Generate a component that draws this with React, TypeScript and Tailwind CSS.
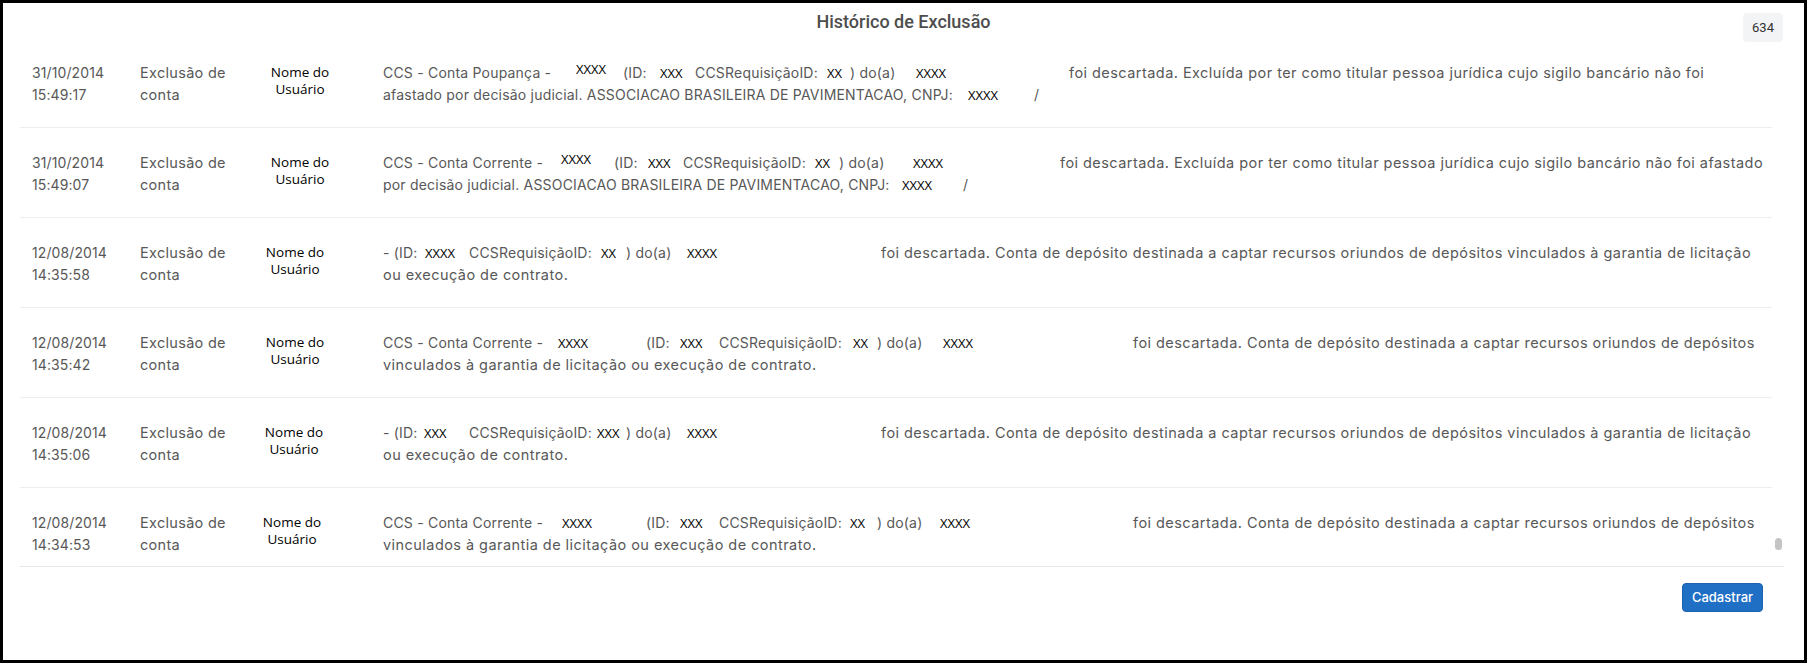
import React from "react";

type Seg = [number, "t" | "m" | "r", string];

interface Row {
    date: [string, string];
    shift: string;
    l1: Seg[];
    l2: Seg[];
}

const rows: Row[] = [
    {
        date: ["31/10/2014", "15:49:17"],
        shift: "",
        l1: [
            [0, "t", "CCS - Conta Poupança -"],
            [193, "r", "XXXX"],
            [240, "t", "(ID:"],
            [277, "m", "XXX"],
            [312, "t", "CCSRequisiçãoID:"],
            [444, "m", "XX"],
            [467, "t", ") do(a)"],
            [533, "m", "XXXX"],
            [686, "t", "foi descartada. Excluída por ter como titular pessoa jurídica cujo sigilo bancário não foi"],
        ],
        l2: [
            [0, "t", "afastado por decisão judicial. ASSOCIACAO BRASILEIRA DE PAVIMENTACAO, CNPJ:"],
            [585, "m", "XXXX"],
            [651, "t", "/"],
        ],
    },
    {
        date: ["31/10/2014", "15:49:07"],
        shift: "",
        l1: [
            [0, "t", "CCS - Conta Corrente -"],
            [178, "r", "XXXX"],
            [231, "t", "(ID:"],
            [265, "m", "XXX"],
            [300, "t", "CCSRequisiçãoID:"],
            [432, "m", "XX"],
            [456, "t", ") do(a)"],
            [530, "m", "XXXX"],
            [677, "t", "foi descartada. Excluída por ter como titular pessoa jurídica cujo sigilo bancário não foi afastado"],
        ],
        l2: [
            [0, "t", "por decisão judicial. ASSOCIACAO BRASILEIRA DE PAVIMENTACAO, CNPJ:"],
            [519, "m", "XXXX"],
            [580, "t", "/"],
        ],
    },
    {
        date: ["12/08/2014", "14:35:58"],
        shift: "-translate-x-[5px]",
        l1: [
            [0, "t", "- (ID:"],
            [42, "m", "XXXX"],
            [86, "t", "CCSRequisiçãoID:"],
            [218, "m", "XX"],
            [243, "t", ") do(a)"],
            [304, "m", "XXXX"],
            [498, "t", "foi descartada. Conta de depósito destinada a captar recursos oriundos de depósitos vinculados à garantia de licitação"],
        ],
        l2: [[0, "t", "ou execução de contrato."]],
    },
    {
        date: ["12/08/2014", "14:35:42"],
        shift: "-translate-x-[5px]",
        l1: [
            [0, "t", "CCS - Conta Corrente -"],
            [175, "m", "XXXX"],
            [263, "t", "(ID:"],
            [297, "m", "XXX"],
            [336, "t", "CCSRequisiçãoID:"],
            [470, "m", "XX"],
            [494, "t", ") do(a)"],
            [560, "m", "XXXX"],
            [750, "t", "foi descartada. Conta de depósito destinada a captar recursos oriundos de depósitos"],
        ],
        l2: [[0, "t", "vinculados à garantia de licitação ou execução de contrato."]],
    },
    {
        date: ["12/08/2014", "14:35:06"],
        shift: "-translate-x-[6px]",
        l1: [
            [0, "t", "- (ID:"],
            [41, "m", "XXX"],
            [86, "t", "CCSRequisiçãoID:"],
            [214, "m", "XXX"],
            [243, "t", ") do(a)"],
            [304, "m", "XXXX"],
            [498, "t", "foi descartada. Conta de depósito destinada a captar recursos oriundos de depósitos vinculados à garantia de licitação"],
        ],
        l2: [[0, "t", "ou execução de contrato."]],
    },
    {
        date: ["12/08/2014", "14:34:53"],
        shift: "-translate-x-[8px]",
        l1: [
            [0, "t", "CCS - Conta Corrente -"],
            [179, "m", "XXXX"],
            [263, "t", "(ID:"],
            [297, "m", "XXX"],
            [336, "t", "CCSRequisiçãoID:"],
            [467, "m", "XX"],
            [494, "t", ") do(a)"],
            [557, "m", "XXXX"],
            [750, "t", "foi descartada. Conta de depósito destinada a captar recursos oriundos de depósitos"],
        ],
        l2: [[0, "t", "vinculados à garantia de licitação ou execução de contrato."]],
    },
];

function Line({ segs }: { segs: Seg[] }) {
    return (
        <div className="flex h-[22px] items-center whitespace-nowrap">
            {segs.map(([x, kind, text], i) => {
                const next = segs[i + 1];
                const style = next ? { width: next[0] - x } : undefined;
                if (kind === "t") {
                    // long running sentence vs. short labels
                    const long = !next && text.length > 20;
                    return (
                        <span
                            key={i}
                            className={
                                long
                                    ? "shrink-0 text-[14.5px] tracking-[0.45px]"
                                    : "shrink-0 text-[14px] tracking-[0.2px]"
                            }
                            style={style}
                        >
                            {text}
                        </span>
                    );
                }
                return (
                    <span
                        key={i}
                        className={
                            "shrink-0 text-[13px] text-black font-['Open_Sans',sans-serif] tracking-normal " +
                            (kind === "r" ? "-translate-y-[4px]" : "")
                        }
                        style={style}
                    >
                        {text}
                    </span>
                );
            })}
        </div>
    );
}

export default function App() {
    return (
        <div className="w-[1807px] h-[663px] border-[3px] border-black bg-white relative overflow-hidden flex flex-col font-['Inter',sans-serif]">
            <div className="h-[35px] shrink-0 flex justify-center pt-[8px]">
                <h1 className="text-[18px] leading-[22px] font-medium text-[#4d4d4d] font-['Roboto',sans-serif]">
                    Histórico de Exclusão
                </h1>
            </div>
            <div className="absolute right-[21px] top-[10px] w-[40px] h-[29px] bg-[#f3f4f5] rounded flex items-center justify-center text-[13px] text-[#333] font-['Roboto',sans-serif]">
                634
            </div>

            <div className="ml-[17px] w-[1764px] h-[529px] shrink-0 border-b border-[#e5e7ea] overflow-hidden relative">
                <div className="pr-[12px]">
                    {rows.map((r, i) => (
                        <div
                            key={i}
                            className="h-[90px] shrink-0 border-b border-[#eceef0] flex text-[14.5px] leading-[22px] text-[#585858]"
                        >
                            <div className="w-[120px] shrink-0 pl-[12px] pt-[24px] text-[14px] tracking-[0.1px]">
                                <div>{r.date[0]}</div>
                                <div>{r.date[1]}</div>
                            </div>
                            <div className="w-[110px] shrink-0 pt-[24px] tracking-[0.3px]">
                                <div>Exclusão de</div>
                                <div>conta</div>
                            </div>
                            <div
                                className={
                                    "w-[100px] shrink-0 pt-[26px] text-center text-[13.5px] leading-[17px] text-black tracking-normal font-['Open_Sans',sans-serif] " +
                                    r.shift
                                }
                            >
                                <div>Nome do</div>
                                <div>Usuário</div>
                            </div>
                            <div className="ml-[33px] pt-[24px] min-w-0">
                                <Line segs={r.l1} />
                                <Line segs={r.l2} />
                            </div>
                        </div>
                    ))}
                </div>
                <div className="absolute right-[2px] top-[500px] w-[7px] h-[12px] rounded-full bg-[#c4c4c4]" />
            </div>

            <div className="flex justify-end pr-[41px] pt-[16px]">
                <button className="w-[81px] h-[29px] rounded-[4px] bg-[#1f6fc4] text-white text-[13px] font-medium font-['Inter',sans-serif] border border-[#1b63b0]">
                    Cadastrar
                </button>
            </div>
        </div>
    );
}
